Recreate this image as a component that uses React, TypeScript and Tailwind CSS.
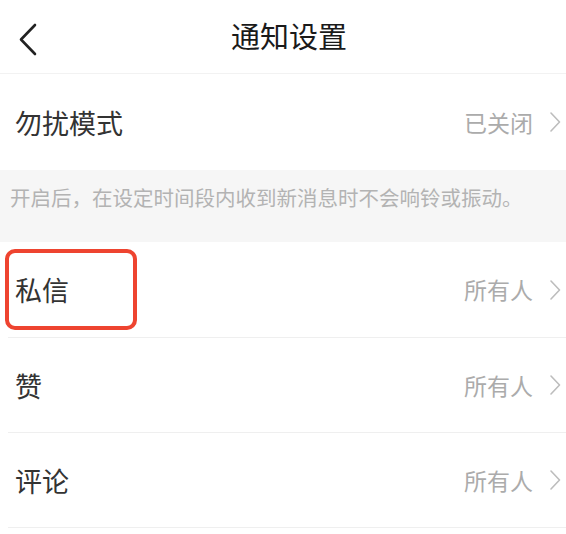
const font = { fontFamily: '"Noto Sans CJK SC", "Noto Sans", sans-serif' };

function Chevron() {
  return (
    <svg width="12" height="20" viewBox="0 0 12 20" fill="none" className="shrink-0">
      <path d="M2 1 L10.5 10 L2 19" stroke="#bdbdbd" strokeWidth="1.6" strokeLinecap="round" strokeLinejoin="round" />
    </svg>
  );
}

export default function App() {
  return (
    <div className="w-[566px] h-[534px] bg-white overflow-hidden" style={font}>
      {/* Header */}
      <div className="relative h-[74px] flex items-center justify-center border-b border-[#f2f2f2]">
        <svg
          width="20"
          height="34"
          viewBox="0 0 20 34"
          fill="none"
          className="absolute left-[18px] top-[23px]"
        >
          <path d="M17 2 L3 16.5 L17 31" stroke="#222222" strokeWidth="2.6" strokeLinecap="round" strokeLinejoin="round" />
        </svg>
        <h1 className="text-[29px] leading-none text-[#1a1a1a] -mt-[2px] ml-[12px]">通知设置</h1>
      </div>

      {/* Do not disturb */}
      <div className="h-[96px] flex items-center justify-between pl-[15px] pr-[5px]">
        <span className="text-[27px] leading-none text-[#333333]">勿扰模式</span>
        <div className="flex items-center gap-[16px]">
          <span className="text-[23px] leading-none text-[#ababab]">已关闭</span>
          <Chevron />
        </div>
      </div>

      {/* Hint */}
      <div className="h-[72px] bg-[#f6f6f6] pl-[10px] pt-[14px]">
        <p className="text-[20.5px] leading-[26px] text-[#b3b3b3] whitespace-nowrap">
          开启后，在设定时间段内收到新消息时不会响铃或振动。
        </p>
      </div>

      {/* Lists */}
      <div className="pl-2">
        <div className="relative">
          <div className="h-[96px] flex items-center justify-between pl-[7px] pr-[5px] border-b border-[#efefef]">
            <span className="text-[27px] leading-none text-[#333333]">私信</span>
            <div className="flex items-center gap-[16px]">
              <span className="text-[23px] leading-none text-[#ababab]">所有人</span>
              <Chevron />
            </div>
          </div>
          <div className="absolute -left-[3px] top-[7px] w-[132px] h-[81px] border-[4.5px] border-[#ee4430] rounded-[10px]" />
        </div>
        <div className="h-[95px] flex items-center justify-between pl-[7px] pr-[5px] border-b border-[#efefef]">
          <span className="text-[27px] leading-none text-[#333333]">赞</span>
          <div className="flex items-center gap-[16px]">
            <span className="text-[23px] leading-none text-[#ababab]">所有人</span>
            <Chevron />
          </div>
        </div>
        <div className="h-[95px] flex items-center justify-between pl-[7px] pr-[5px] border-b border-[#efefef]">
          <span className="text-[27px] leading-none text-[#333333]">评论</span>
          <div className="flex items-center gap-[16px]">
            <span className="text-[23px] leading-none text-[#ababab]">所有人</span>
            <Chevron />
          </div>
        </div>
      </div>
    </div>
  );
}
